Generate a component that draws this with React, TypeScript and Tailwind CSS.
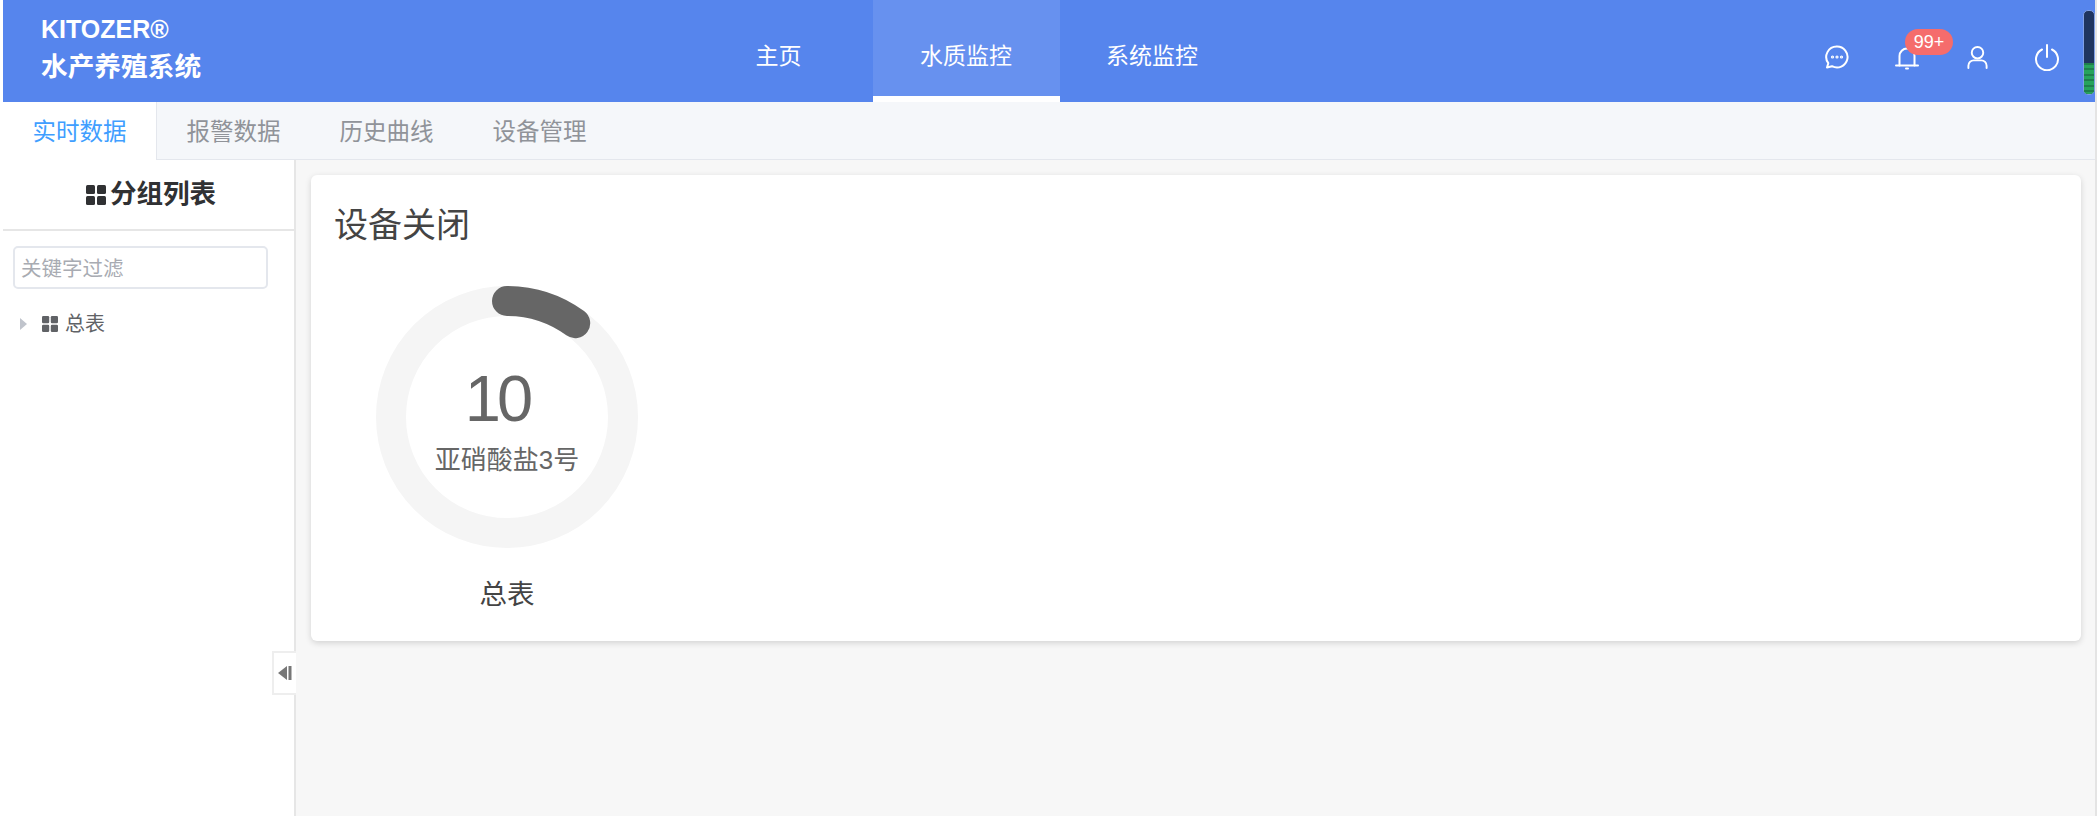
import React from "react";

const font = { fontFamily: '"Liberation Sans", "Noto Sans CJK SC", sans-serif' };

function Grid({ className }: { className: string }) {
  return (
    <svg viewBox="0 0 20 20" className={className} fill="currentColor">
      <rect x="0" y="0" width="9" height="9" rx="1.5" />
      <rect x="11" y="0" width="9" height="9" rx="1.5" />
      <rect x="0" y="11" width="9" height="9" rx="1.5" />
      <rect x="11" y="11" width="9" height="9" rx="1.5" />
    </svg>
  );
}

const stroke = { fill: "none", stroke: "white", strokeWidth: 2, strokeLinecap: "round" as const, strokeLinejoin: "round" as const };

function Cell({ children }: { children: React.ReactNode }) {
  return <div className="relative flex h-[102px] w-[70px] items-center justify-center pt-[12px]">{children}</div>;
}

export default function App() {
  return (
    <div style={font} className="h-screen w-full overflow-hidden bg-white pl-[3px] pr-[2px]">
      <div className="flex h-full flex-col border-r-2 border-[#e4e4e4]">
        <header className="flex h-[102px] shrink-0 bg-[#5685ed] text-white">
          <div className="w-[684px] pl-[38px] pt-[11px]">
            <div className="h-[37px] text-[25px] leading-[37px] font-bold">KITOZER®</div>
            <div className="h-[37px] pt-[1px] text-[26.7px] leading-[37px] font-bold">水产养殖系统</div>
          </div>
          <nav className="flex text-[23px]">
            <div className="flex h-[102px] w-[186px] items-center justify-center border-b-[6px] border-transparent pr-[3px] pt-[16px]">主页</div>
            <div className="flex h-[102px] w-[187px] items-center justify-center border-b-[6px] border-white bg-[#6791ef] pr-[1px] pt-[16px]">水质监控</div>
            <div className="flex h-[102px] w-[187px] items-center justify-center border-b-[6px] border-transparent pr-[3px] pt-[16px]">系统监控</div>
          </nav>
          <div className="ml-auto flex items-center">
            <Cell>
              <svg width="26" height="26" viewBox="0 0 26 26" {...stroke}>
                <path d="M13 2.5a10.5 10.5 0 1 1-5 19.7L3 23.5l1.3-4.3A10.5 10.5 0 0 1 13 2.5z" />
                <circle cx="8.5" cy="13" r="0.6" />
                <circle cx="13" cy="13" r="0.6" />
                <circle cx="17.5" cy="13" r="0.6" />
              </svg>
            </Cell>
            <Cell>
              <svg width="26" height="26" viewBox="0 0 26 26" {...stroke}>
                <path d="M2 21.5h22" />
                <path d="M5.5 21.5V12a7.5 7.5 0 0 1 15 0v9.5" />
                <path d="M12 24.5h2" />
              </svg>
              <span className="absolute left-[33px] top-[29px] flex h-[26px] w-[48px] items-center justify-center rounded-[13px] bg-[#f56c6c] text-[18px] text-white">99+</span>
            </Cell>
            <Cell>
              <svg width="23" height="25" viewBox="0 0 24 26" {...stroke}>
                <circle cx="12" cy="8" r="6" />
                <path d="M2.5 24v-2.5a5.5 5.5 0 0 1 5.5-5.5h8a5.5 5.5 0 0 1 5.5 5.5V24" />
              </svg>
            </Cell>
            <Cell>
              <svg width="26" height="28" viewBox="0 0 26 28" {...stroke}>
                <path d="M13 2v12" />
                <path d="M8 6.5a11 11 0 1 0 10 0" />
              </svg>
            </Cell>
            <div className="ml-[1px] mt-[3px] flex h-[85px] w-[12px] flex-col overflow-hidden rounded-[5px] border border-[#7f9fe6] bg-[#1f3560]">
              <div className="h-[52px]"></div>
              <div className="flex flex-1 flex-col justify-between bg-[#27a35c] pb-[2px]">
                <div className="h-[2px] bg-[#1f7f4c]"></div>
                <div className="h-[2px] bg-[#1f7f4c]"></div>
                <div className="h-[2px] bg-[#1f7f4c]"></div>
                <div className="h-[2px] bg-[#1f7f4c]"></div>
                <div className="h-[2px] bg-[#1f7f4c]"></div>
                <div className="h-[2px] bg-[#1f7f4c]"></div>
              </div>
            </div>
          </div>
        </header>

        <div className="flex h-[58px] shrink-0 border-b border-[#e4e7ed] bg-[#f5f7fa] text-[23.5px] text-[#909399]">
          <div className="flex h-[58px] w-[154px] items-center justify-center border-r border-[#e4e7ed] bg-white pt-[4px] text-[#409eff]">实时数据</div>
          <div className="flex w-[153px] items-center justify-center pt-[4px]">报警数据</div>
          <div className="flex w-[153px] items-center justify-center pt-[4px]">历史曲线</div>
          <div className="flex w-[153px] items-center justify-center pt-[4px]">设备管理</div>
        </div>

        <div className="flex min-h-0 flex-1">
          <aside className="relative w-[293px] shrink-0 border-r-2 border-[#e6e6e6] bg-white">
            <div className="flex h-[71px] items-center border-b-2 border-[#e6e6e6] pl-[83px] text-[#303133]">
              <Grid className="h-[20px] w-[20px]" />
              <span className="ml-[4px] text-[26.5px] font-bold">分组列表</span>
            </div>
            <div className="ml-[10px] mt-[15px] flex h-[43px] w-[255px] items-center rounded-[5px] border-2 border-[#e4e7ed] pl-[6px] pt-[4px] text-[20.5px] text-[#a8abb2]">关键字过滤</div>
            <div className="mt-[20px] flex h-[30px] items-center text-[20px] text-[#606266]">
              <svg width="7" height="12" viewBox="0 0 7 12" className="ml-[17px]" fill="#c0c4cc">
                <path d="M0 0l7 6-7 6z" />
              </svg>
              <Grid className="ml-[15px] h-[16px] w-[16px]" />
              <span className="ml-[7px]">总表</span>
            </div>
            <div className="absolute right-[-2px] top-[491px] flex h-[44px] w-[24px] items-center justify-center border-2 border-r-0 border-[#eeeeee] bg-white">
              <svg width="14" height="14" viewBox="0 0 14 14" fill="#777">
                <path d="M0 7l9-7v14z" />
                <rect x="10.5" y="0" width="3" height="14" />
              </svg>
            </div>
          </aside>

          <main className="flex-1 bg-[#f7f7f7] pl-[15px] pr-[14px] pt-[15px]">
            <div className="h-[466px] rounded-[6px] bg-white pt-[30px] shadow-[0_2px_6px_rgba(0,0,0,0.15)]">
              <div className="pl-[23px] text-[34px] leading-[40px] text-[#444]">设备关闭</div>
              <div className="mt-[41px] flex w-[392px] flex-col items-center">
                <div className="relative h-[262px] w-[262px]">
                  <svg width="262" height="262" viewBox="0 0 262 262">
                    <circle cx="131" cy="131" r="116" fill="none" stroke="#f5f5f5" strokeWidth="30" />
                    <path d="M131 15A116 116 0 0 1 199.2 37.2" fill="none" stroke="#666" strokeWidth="30" strokeLinecap="round" />
                  </svg>
                  <div className="absolute inset-x-0 top-[77px] pr-[20px] text-center text-[65px] leading-[72px] tracking-[-4px] text-[#666]">10</div>
                  <div className="absolute inset-x-0 top-[158px] text-center text-[26px] leading-[32px] text-[#666]">亚硝酸盐3号</div>
                </div>
                <div className="mt-[31px] text-[27.5px] leading-[32px] text-[#444]">总表</div>
              </div>
            </div>
          </main>
        </div>
      </div>
    </div>
  );
}
